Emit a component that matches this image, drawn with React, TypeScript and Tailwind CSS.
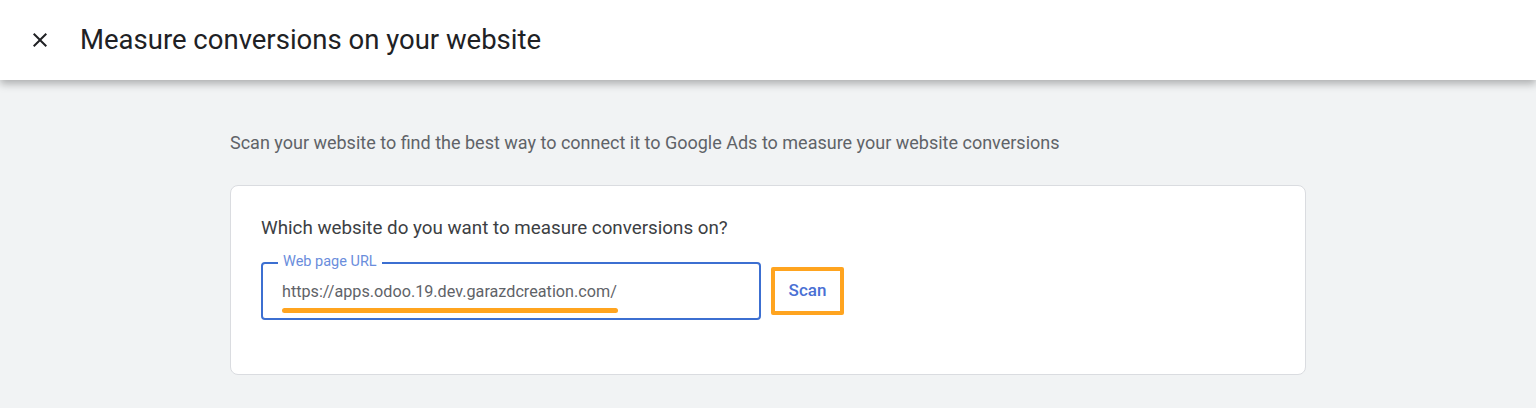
import React from "react";

function CloseIcon() {
  return (
    <svg width="24" height="24" viewBox="0 0 24 24" className="text-[#202124]">
      <path d="M19 6.41 17.59 5 12 10.59 6.41 5 5 6.41 10.59 12 5 17.59 6.41 19 12 13.41 17.59 19 19 17.59 13.41 12z" fill="currentColor" />
    </svg>
  );
}

export default function App() {
  return (
    <div className="h-[408px] w-full overflow-hidden bg-[#f1f3f4] font-['Roboto',sans-serif]">
      <header className="relative z-10 flex h-[80px] items-center bg-white shadow-[0_4px_8px_rgba(0,0,0,0.28)]">
        <button className="ml-[28px] flex h-[24px] w-[24px] items-center justify-center">
          <CloseIcon />
        </button>
        <h1 className="ml-[28px] text-[27.5px] font-normal text-[#202124]">
          Measure conversions on your website
        </h1>
      </header>

      <main className="mx-auto w-[1076px] pt-[51px]">
        <p className="text-[18px] leading-[24px] text-[#5f6368]">
          Scan your website to find the best way to connect it to Google Ads to measure your website conversions
        </p>

        <section className="mt-[30px] h-[190px] rounded-[8px] border border-[#dadce0] bg-white px-[30px] pt-[30px]">
          <h2 className="text-[18.8px] leading-[24px] text-[#3c4043]">
            Which website do you want to measure conversions on?
          </h2>

          <div className="mt-[22px] flex items-center gap-[10px]">
            <div className="relative h-[58px] w-[500px] rounded-[4px] border-2 border-[#3c6fd1]">
              <span className="absolute left-[15px] top-[-11px] bg-white px-[5px] text-[14.5px] leading-[18px] text-[#6a8ddc]">
                Web page URL
              </span>
              <div className="flex h-full flex-col justify-center px-[19px] pt-[2px]">
                <span className="text-[16.2px] leading-[20px] text-[#5f6368]">
                  https://apps.odoo.19.dev.garazdcreation.com/
                </span>
              </div>
              <div className="absolute left-[19px] top-[44px] h-[5px] w-[336px] rounded-full bg-[#ffa41f]" />
            </div>
            <button className="flex h-[48px] w-[73px] items-center justify-center rounded-[2px] border-[4px] border-[#ffa41f] text-[17px] font-medium text-[#4a70d4]">
              Scan
            </button>
          </div>
        </section>
      </main>
    </div>
  );
}
